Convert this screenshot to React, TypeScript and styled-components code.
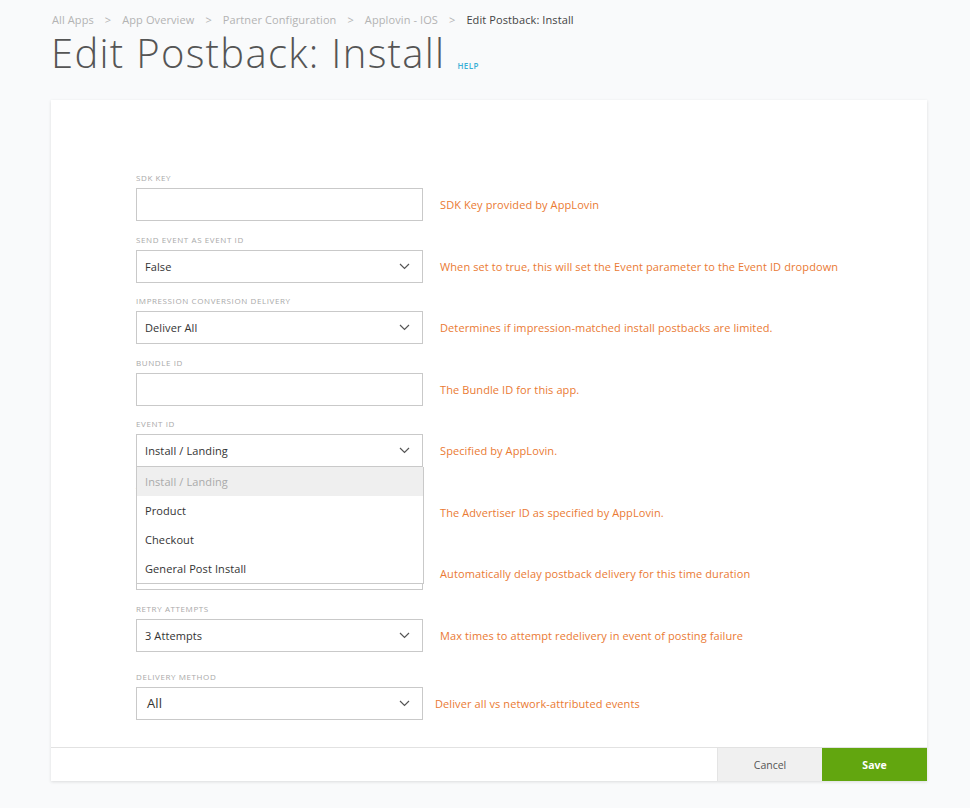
import React from 'react';
import styled, { createGlobalStyle } from 'styled-components';

const GlobalStyle = createGlobalStyle`
  html, body {
    margin: 0;
    padding: 0;
    background: #f9fafb;
    font-family: "Open Sans", Lato, "Liberation Sans", sans-serif;
  }
`;

const Page = styled.div`
  padding: 12px 43px 27px 51px;
  display: flex;
  flex-direction: column;
`;

const Crumbs = styled.div`
  display: flex;
  align-items: center;
  gap: 10px;
  font-size: 11px;
  letter-spacing: 0.1px;
  line-height: 16px;
  color: #b3b3b3;
  padding-left: 1px;
`;

const Crumb = styled.span<{ $current?: boolean }>`
  color: ${(p) => (p.$current ? '#444' : '#b3b3b3')};
`;

const Sep = styled.span`
  color: #b3b3b3;
  padding: 0 1px;
`;

const TitleRow = styled.div`
  display: flex;
  align-items: flex-end;
  gap: 12px;
  margin-top: 3px;
  height: 44px;
`;

const Title = styled.h1`
  margin: 0;
  font-size: 40px;
  line-height: 44px;
  font-weight: 300;
  color: #555;
  letter-spacing: 1.3px;
`;

const Help = styled.a`
  font-size: 8px;
  font-weight: 600;
  letter-spacing: 0.4px;
  color: #3aafd6;
  margin-bottom: 4px;
  text-decoration: none;
`;

const Card = styled.div`
  margin-top: 25px;
  background: #fff;
  box-shadow: 0 1px 3px rgba(0, 0, 0, 0.12);
  display: flex;
  flex-direction: column;
`;

const FormBody = styled.div`
  padding: 73px 85px 14px 85px;
  display: flex;
  flex-direction: column;
  border-bottom: 1px solid #e2e2e2;
`;

const Field = styled.div<{ $extra?: number }>`
  display: flex;
  flex-direction: column;
  margin-top: ${(p) => p.$extra ?? 0}px;
  margin-bottom: 13.5px;
`;

const Label = styled.label`
  font-size: 8px;
  line-height: 10px;
  letter-spacing: 0.6px;
  text-transform: uppercase;
  color: #a9a9a9;
  margin-bottom: 5px;
`;

const ControlRow = styled.div`
  display: flex;
  align-items: center;
`;

const ControlWrap = styled.div`
  position: relative;
  width: 287px;
  flex: none;
`;

const Box = styled.div<{ $large?: boolean }>`
  box-sizing: border-box;
  height: 33px;
  border: 1px solid #c9c9c9;
  background: #fff;
  display: flex;
  align-items: center;
  justify-content: space-between;
  padding: 0 12px 0 ${(p) => (p.$large ? 10 : 8)}px;
  font-size: ${(p) => (p.$large ? 13 : 11)}px;
  letter-spacing: 0.1px;
  color: #333;
`;

const HelpText = styled.span<{ $shift?: number }>`
  margin-left: ${(p) => 17 - (p.$shift ?? 0)}px;
  font-size: 11px;
  letter-spacing: 0.1px;
  color: #ea7a33;
`;

const Menu = styled.ul`
  position: absolute;
  top: 33px;
  left: 0;
  right: -1px;
  margin: 0;
  padding: 0;
  list-style: none;
  background: #fff;
  border: 1px solid #c9c9c9;
  border-top: none;
  z-index: 2;
`;

const Option = styled.li<{ $selected?: boolean }>`
  height: 29px;
  display: flex;
  align-items: center;
  padding-left: 8px;
  font-size: 11px;
  letter-spacing: 0.1px;
  color: ${(p) => (p.$selected ? '#aaa' : '#333')};
  background: ${(p) => (p.$selected ? '#efefef' : '#fff')};
`;

const Footer = styled.div`
  display: flex;
  justify-content: flex-end;
  height: 33px;
`;

const FooterButton = styled.button<{ $primary?: boolean }>`
  width: 105px;
  height: 33px;
  border: none;
  font-family: "Open Sans", Lato, "Liberation Sans", sans-serif;
  font-size: 10.5px;
  font-weight: ${(p) => (p.$primary ? 700 : 400)};
  color: ${(p) => (p.$primary ? '#fff' : '#555')};
  background: ${(p) => (p.$primary ? '#62a60f' : '#f0f0f0')};
  border-left: ${(p) => (p.$primary ? 'none' : '1px solid #e4e4e4')};
  cursor: pointer;
`;

const Chevron = () => (
  <svg width="11" height="7" viewBox="0 0 11 7" fill="none">
    <path d="M1 1l4.5 4.5L10 1" stroke="#555" strokeWidth="1.2" />
  </svg>
);

type FieldDef = {
  label: string;
  value?: string;
  select?: boolean;
  help: string;
  large?: boolean;
  extra?: number;
  shift?: number;
  menu?: string[];
};

const fields: FieldDef[] = [
  { label: 'SDK Key', help: 'SDK Key provided by AppLovin' },
  {
    label: 'Send Event as Event ID',
    value: 'False',
    select: true,
    help: 'When set to true, this will set the Event parameter to the Event ID dropdown',
  },
  {
    label: 'Impression Conversion Delivery',
    value: 'Deliver All',
    select: true,
    help: 'Determines if impression-matched install postbacks are limited.',
  },
  { label: 'Bundle ID', help: 'The Bundle ID for this app.' },
  {
    label: 'Event ID',
    value: 'Install / Landing',
    select: true,
    help: 'Specified by AppLovin.',
    menu: ['Install / Landing', 'Product', 'Checkout', 'General Post Install'],
  },
  { label: 'Advertiser ID', help: 'The Advertiser ID as specified by AppLovin.' },
  {
    label: 'Postback Delay',
    value: 'No Delay',
    select: true,
    help: 'Automatically delay postback delivery for this time duration',
  },
  {
    label: 'Retry Attempts',
    value: '3 Attempts',
    select: true,
    help: 'Max times to attempt redelivery in event of posting failure',
  },
  {
    label: 'Delivery Method',
    value: 'All',
    select: true,
    large: true,
    extra: 6.5,
    shift: 5,
    help: 'Deliver all vs network-attributed events',
  },
];

export default function App() {
  return (
    <>
      <GlobalStyle />
      <Page>
        <Crumbs>
          <Crumb>All Apps</Crumb>
          <Sep>&gt;</Sep>
          <Crumb>App Overview</Crumb>
          <Sep>&gt;</Sep>
          <Crumb>Partner Configuration</Crumb>
          <Sep>&gt;</Sep>
          <Crumb>Applovin - IOS</Crumb>
          <Sep>&gt;</Sep>
          <Crumb $current>Edit Postback: Install</Crumb>
        </Crumbs>
        <TitleRow>
          <Title>Edit Postback: Install</Title>
          <Help href="#">HELP</Help>
        </TitleRow>
        <Card>
          <FormBody>
            {fields.map((f) => (
              <Field key={f.label} $extra={f.extra}>
                <Label>{f.label}</Label>
                <ControlRow>
                  <ControlWrap>
                    <Box $large={f.large}>
                      <span>{f.value ?? ''}</span>
                      {f.select && <Chevron />}
                    </Box>
                    {f.menu && (
                      <Menu>
                        {f.menu.map((m, i) => (
                          <Option key={m} $selected={i === 0}>
                            {m}
                          </Option>
                        ))}
                      </Menu>
                    )}
                  </ControlWrap>
                  <HelpText $shift={f.shift}>{f.help}</HelpText>
                </ControlRow>
              </Field>
            ))}
          </FormBody>
          <Footer>
            <FooterButton>Cancel</FooterButton>
            <FooterButton $primary>Save</FooterButton>
          </Footer>
        </Card>
      </Page>
    </>
  );
}
